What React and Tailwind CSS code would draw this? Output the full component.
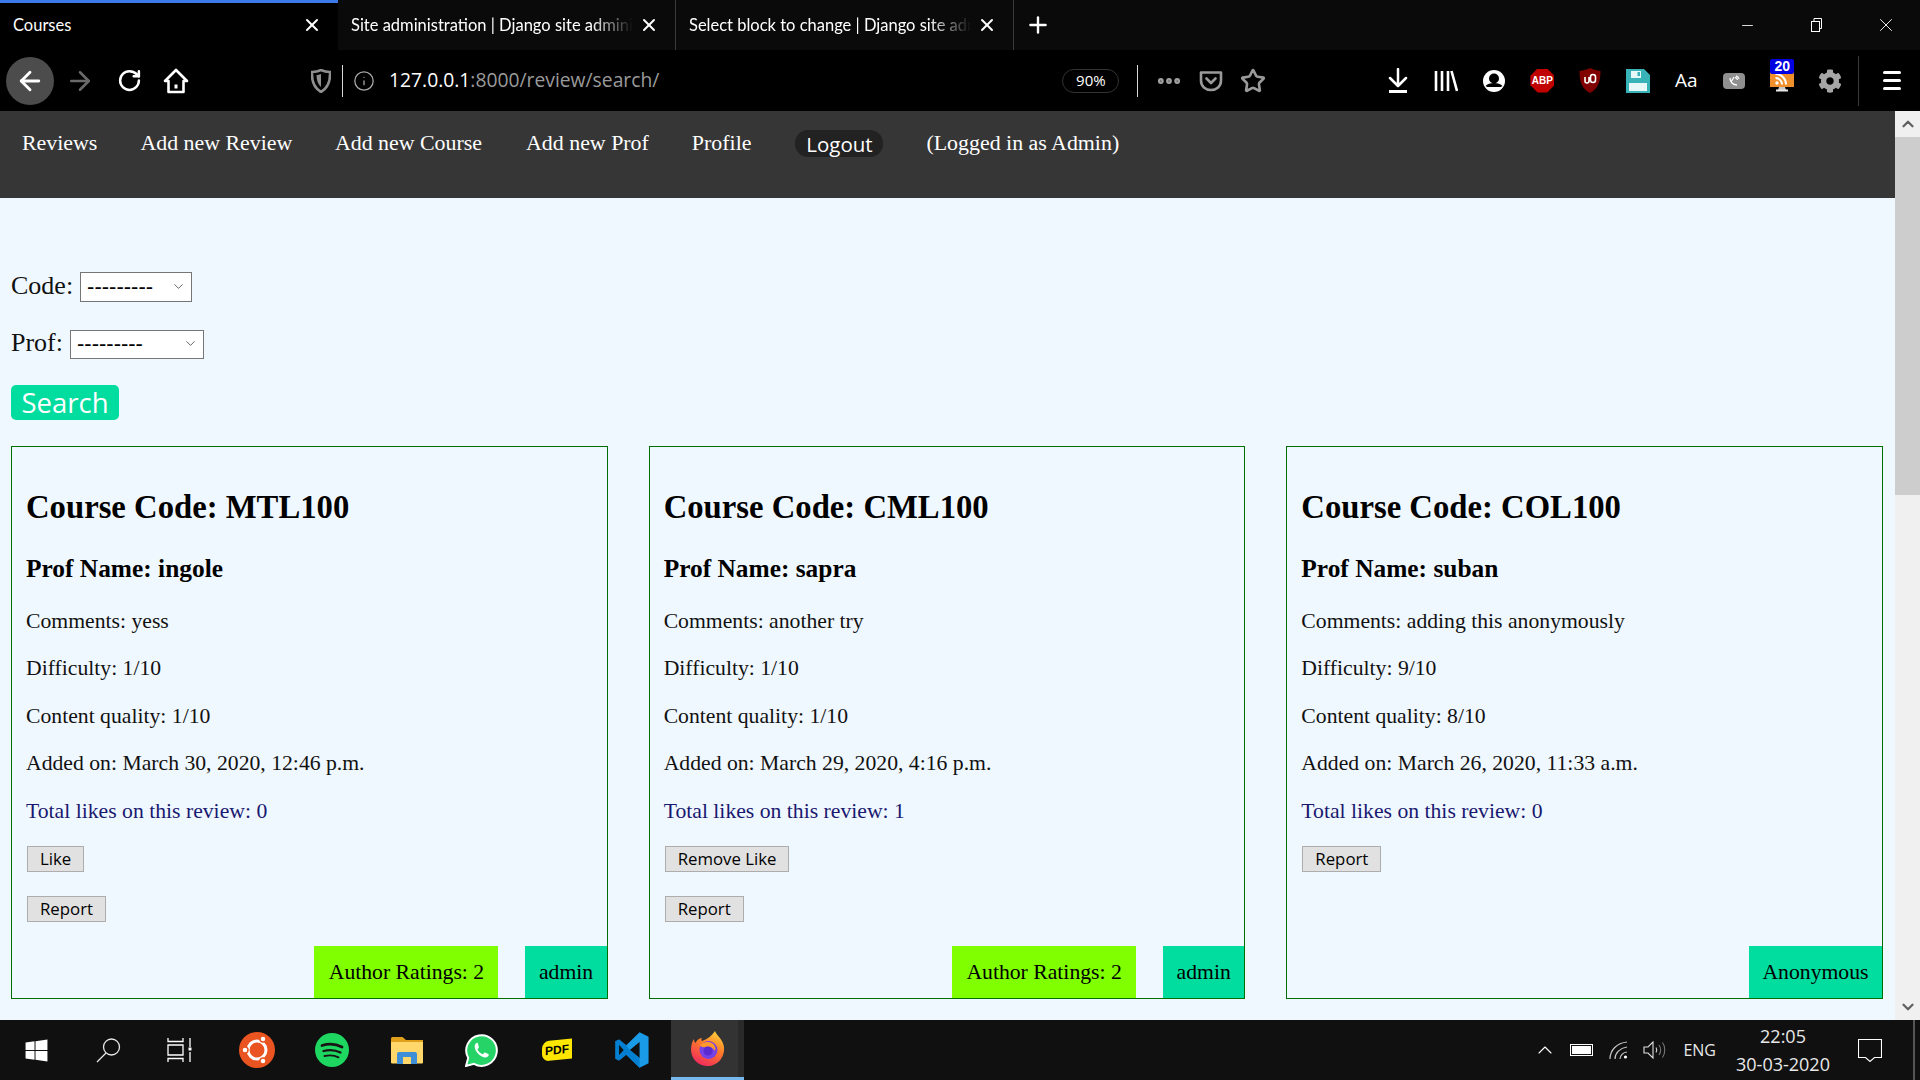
import { ArrowLeft, ArrowRight, RotateCw, Info, Star, Ellipsis, X, Plus, Minus, ChevronDown, ChevronUp } from "lucide-react";
import { FaWindows, FaCog } from "react-icons/fa";

const SERIF = "font-['Liberation_Serif',serif]";
const UI = "font-['Open_Sans',sans-serif]";

const REVIEWS = [
  {
    code: "MTL100",
    prof: "ingole",
    comments: "yess",
    difficulty: "1/10",
    quality: "1/10",
    added: "March 30, 2020, 12:46 p.m.",
    likes: 0,
    like: "Like",
    ratings: 2,
    author: "admin",
  },
  {
    code: "CML100",
    prof: "sapra",
    comments: "another try",
    difficulty: "1/10",
    quality: "1/10",
    added: "March 29, 2020, 4:16 p.m.",
    likes: 1,
    like: "Remove Like",
    ratings: 2,
    author: "admin",
  },
  {
    code: "COL100",
    prof: "suban",
    comments: "adding this anonymously",
    difficulty: "9/10",
    quality: "8/10",
    added: "March 26, 2020, 11:33 a.m.",
    likes: 0,
    author: "Anonymous",
  },
];

function Tab({ title, active, fade }) {
  return (
    <div className={`flex h-[50px] w-[338px] items-center pl-[13px] pr-[16px] ${active ? "border-t-[3px] border-[#3b7ae8] bg-black pb-[3px]" : "border-r border-[#3a3a3a]"}`}>
      <span className={`flex-1 overflow-hidden whitespace-nowrap font-['Lato',sans-serif] text-[16.5px] text-white ${fade ? "[mask-image:linear-gradient(to_right,black_85%,transparent)]" : ""}`}>
        {title}
      </span>
      <X size={20} strokeWidth={2.4} className="ml-[6px] shrink-0 text-white" />
    </div>
  );
}

function ToolIcon({ children, className = "" }) {
  return <div className={`flex h-[61px] w-[48px] shrink-0 items-center justify-center ${className}`}>{children}</div>;
}

function TabBar() {
  return (
    <div className="flex h-[50px] shrink-0 items-center bg-[#0a0a0a]">
      <Tab title="Courses" active />
      <Tab title="Site administration | Django site administration" fade />
      <Tab title="Select block to change | Django site admin" fade />
      <Plus size={26} strokeWidth={2.2} className="ml-[11px] text-white" />
      <div className="ml-auto flex items-center">
        <div className="flex w-[69px] justify-center"><Minus size={17} strokeWidth={1.2} className="text-white" /></div>
        <div className="flex w-[69px] justify-center">
          <svg width="15" height="16" viewBox="0 0 15 16" fill="none" stroke="white">
            <rect x="2.5" y="4.5" width="8" height="10" />
            <path d="M5 4.5V1.5h7.5v10h-2" />
          </svg>
        </div>
        <div className="flex w-[69px] justify-center"><X size={22} strokeWidth={1} className="text-white" /></div>
      </div>
    </div>
  );
}

function Toolbar() {
  return (
    <div className="flex h-[61px] shrink-0 items-center bg-black">
      <div className="ml-[6px] flex h-[48px] w-[48px] items-center justify-center rounded-full bg-[#4c4c4c]">
        <ArrowLeft size={30} strokeWidth={2.3} className="text-white" />
      </div>
      <ToolIcon className="ml-[2px]"><ArrowRight size={30} strokeWidth={2} className="text-[#6a6a6a]" /></ToolIcon>
      <ToolIcon className="ml-[1px]"><RotateCw size={25} strokeWidth={2.4} className="text-white" /></ToolIcon>
      <ToolIcon className="-ml-[1px]">
        <svg width="26" height="26" viewBox="0 0 26 26" fill="none" stroke="white" strokeWidth="2.6" strokeLinejoin="round">
          <path d="M2 13 13 2l11 11h-3.500v11h-15V13z" />
          <rect x="11.500" y="16.500" width="3" height="4" fill="white" stroke="none" />
        </svg>
      </ToolIcon>

      <ToolIcon className="ml-[97px]">
        <svg width="20" height="24" viewBox="0 0 20 24">
          <path d="M10 1c3 1.500 6 2 9 2 .500 9-2 16-9 20C3 19 .500 12 1 3c3 0 6-.500 9-2z" fill="none" stroke="#8f8f8f" strokeWidth="2.6" />
          <path d="M10 5c-1.500.800-3 1-4.500 1.200C5.500 11 7 15.500 10 18z" fill="#8f8f8f" />
        </svg>
      </ToolIcon>
      <div className="-ml-[3px] h-[32px] w-px bg-[#d8d8d8]" />
      <Info size={22} strokeWidth={1.4} className="ml-[10px] text-[#a8a8a8]" />
      <div className={`ml-[14px] text-[19.3px] ${UI}`}>
        <span className="text-white">127.0.0.1</span>
        <span className="text-[#9a9a9a]">:8000/review/search/</span>
      </div>

      <div className={`ml-[403px] flex h-[24px] w-[57px] items-center justify-center rounded-full border border-[#333] text-[15px] text-white ${UI}`}>90%</div>
      <div className="ml-[18px] h-[32px] w-px bg-[#d8d8d8]" />
      <ToolIcon className="ml-[7px]"><Ellipsis size={28} strokeWidth={3} className="text-[#a0a0a0]" /></ToolIcon>
      <ToolIcon className="-ml-[6px]">
        <svg width="24" height="24" viewBox="0 0 24 24" fill="none" stroke="#9a9a9a" strokeWidth="2.6" strokeLinejoin="round" strokeLinecap="round">
          <path d="M2 3.500h20v8c0 6-4.500 9.500-10 9.500S2 17.500 2 11.500z" />
          <path d="m7.500 9.500 4.500 4.500 4.500-4.500" />
        </svg>
      </ToolIcon>
      <ToolIcon className="-ml-[6px]"><Star size={26} strokeWidth={2.4} className="text-[#9a9a9a]" /></ToolIcon>

      <ToolIcon className="ml-[97px]">
        <svg width="20" height="25" viewBox="0 0 20 25" fill="none" stroke="white" strokeWidth="2.5" strokeLinecap="round" strokeLinejoin="round">
          <path d="M10 1v16M2 10l8 8 8-8" />
          <path d="M1 23.500h18" strokeLinecap="butt" strokeWidth="3" />
        </svg>
      </ToolIcon>
      <ToolIcon>
        <svg width="24" height="24" viewBox="0 0 24 24" fill="none" stroke="white" strokeWidth="2.6">
          <path d="M2 2v20M8 2v20M14 2v20M17.500 2l5.500 20" />
        </svg>
      </ToolIcon>
      <ToolIcon>
        <svg width="24" height="24" viewBox="0 0 24 24">
          <circle cx="12" cy="12" r="11" fill="white" />
          <circle cx="12" cy="9.500" r="5" fill="black" />
          <path d="M3.500 17c3-4 14-4 17 0-2 1.500-3 1-8.500 1s-6.500.500-8.500-1z" fill="black" />
        </svg>
      </ToolIcon>
      <ToolIcon>
        <div className="relative flex h-[24px] w-[24px] items-center justify-center bg-[#c10000] [clip-path:polygon(30%_0,70%_0,100%_30%,100%_70%,70%_100%,30%_100%,0_70%,0_30%)]">
          <span className="font-['Liberation_Sans',sans-serif] text-[10px] font-bold leading-none text-white">ABP</span>
        </div>
      </ToolIcon>
      <ToolIcon>
        <svg width="22" height="25" viewBox="0 0 22 25">
          <path d="M11 0c3 1.500 7 2.500 10.500 3 0 10-2 17.500-10.500 22C2.500 20.500.500 13 .500 3 4 2.500 8 1.500 11 0z" fill="#800000" />
          <path d="M6 9v4a2 2 0 0 0 4 0V9M11.500 13V9a2.500 2.500 0 0 1 5 0v3a2.500 2.500 0 0 1-5 0z" fill="none" stroke="white" strokeWidth="1.6" />
        </svg>
      </ToolIcon>
      <ToolIcon>
        <svg width="24" height="24" viewBox="0 0 24 24">
          <path d="M0 0h18l6 6v18H0z" fill="#38b4b8" />
          <path d="M5 2h10v7H5zM3 14h18v8H3z" fill="#e8f8f8" />
          <path d="M11.500 3h2.500v4h-2.500z" fill="#38b4b8" />
        </svg>
      </ToolIcon>
      <ToolIcon><span className={`text-[19px] text-white ${UI}`}>Aa</span></ToolIcon>
      <ToolIcon>
        <div className="flex h-[16px] w-[22px] items-center justify-center rounded-[4px] bg-[#8f8f8f]">
          <svg width="12" height="12" viewBox="0 0 12 12" fill="none" stroke="white" strokeWidth="1.300">
            <path d="M2 3c0 4 3 7 7 7M6 2l-3 5M7 2.500a3 3 0 0 1 2.500 2.500M8 .800a5 5 0 0 1 3 3" />
          </svg>
        </div>
      </ToolIcon>
      <ToolIcon className="relative">
        <svg width="24" height="24" viewBox="0 0 24 24">
          <rect x="0" y="1" width="24" height="17" fill="#f0902c" />
          <path d="M9 18h6l1 3H8z" fill="#c8c8c8" />
          <path d="M6 20.500h12v2H6z" fill="#e8e8e8" />
          <circle cx="7" cy="14" r="1.700" fill="white" />
          <path d="M5.500 9a6.500 6.500 0 0 1 6.500 6.500M5.500 5a10.500 10.500 0 0 1 10.500 10.500" fill="none" stroke="white" strokeWidth="2" />
        </svg>
        <span className="absolute left-[12px] top-[9px] flex h-[15px] w-[24px] items-center justify-center rounded-[2px] bg-[#0000e0] font-['Liberation_Sans',sans-serif] text-[14px] font-bold text-white">20</span>
      </ToolIcon>
      <ToolIcon><FaCog size={24} className="text-[#a6a6a6]" /></ToolIcon>
      <div className="ml-[4px] h-[50px] w-px bg-[#3a3a3a]" />
      <div className="ml-[24px] flex flex-col gap-[5px]">
        <div className="h-[3px] w-[18px] rounded-full bg-white" />
        <div className="h-[3px] w-[18px] rounded-full bg-white" />
        <div className="h-[3px] w-[18px] rounded-full bg-white" />
      </div>
    </div>
  );
}

function NavBar() {
  return (
    <nav className={`flex h-[87px] items-start bg-[#363636] pl-[22px] pt-[18px] text-[21.9px] leading-[28px] text-white ${SERIF}`}>
      <a>Reviews</a>
      <a className="ml-[43px]">Add new Review</a>
      <a className="ml-[42.5px]">Add new Course</a>
      <a className="ml-[44px]">Add new Prof</a>
      <a className="ml-[43px]">Profile</a>
      <a className={`ml-[44px] mt-[1px] flex h-[27px] w-[88px] items-center justify-center rounded-[13px] bg-[#222222] text-[20.5px] ${UI}`}>Logout</a>
      <span className="ml-[43px]">(Logged in as Admin)</span>
    </nav>
  );
}

function Select({ className }) {
  return (
    <div className={`relative ml-[7px] ${className}`}>
      <select className="h-full w-full appearance-none rounded-none border border-[#767676] bg-white pl-[6px] font-['Liberation_Sans',sans-serif] text-[22px] leading-none text-black">
        <option>---------</option>
      </select>
      <ChevronDown size={15} strokeWidth={1.2} className="pointer-events-none absolute right-[6px] top-[8px] text-[#333]" />
    </div>
  );
}

function SearchForm() {
  return (
    <form className={`text-[26px] leading-[30px] text-[#111] ${SERIF}`}>
      <div className="flex h-[30px] items-center">
        <label>Code:</label>
        <Select className="h-[30px] w-[112px]" />
      </div>
      <div className="mt-[27px] flex h-[29px] items-center">
        <label>Prof:</label>
        <Select className="h-[29px] w-[134px]" />
      </div>
      <button type="button" className={`mt-[28px] block h-[35px] w-[108px] rounded-[5px] bg-[#00dd9f] text-[27.5px] leading-[34px] text-white ${UI}`}>Search</button>
    </form>
  );
}

function ReviewCard({ review }) {
  const btn = `block h-[26px] border border-[#adadad] bg-[#e1e1e1] px-[12px] text-[16.8px] leading-[24px] text-black ${UI}`;
  return (
    <div className={`flex h-[553px] flex-col border border-[#006e00] text-[21.7px] leading-[24px] text-[#111] ${SERIF}`}>
      <div className="px-[14px]">
        <h2 className="mt-[41px] text-[32.7px] font-bold leading-[38px] text-black">Course Code: {review.code}</h2>
        <h3 className="mt-[27px] text-[25.4px] font-bold leading-[30px] text-black">Prof Name: {review.prof}</h3>
        <p className="mt-[26px]">Comments: {review.comments}</p>
        <p className="mt-[23.4px]">Difficulty: {review.difficulty}</p>
        <p className="mt-[23.4px]">Content quality: {review.quality}</p>
        <p className="mt-[23.4px]">Added on: {review.added}</p>
        <p className="mt-[23.4px] text-[#191970]">Total likes on this review: {review.likes}</p>
        <div className="pl-[1px]">
          {review.like && <button type="button" className={`mt-[23px] ${btn}`}>{review.like}</button>}
          <button type="button" className={`${review.like ? "mt-[24px]" : "mt-[23px]"} ${btn}`}>Report</button>
        </div>
      </div>
      <div className="mt-auto flex justify-end gap-[27px]">
        {review.ratings && (
          <div className="flex h-[52px] w-[184px] items-center justify-center bg-[#7fff00] text-black">Author Ratings: {review.ratings}</div>
        )}
        <div className="flex h-[52px] items-center bg-[#00dd9f] px-[13.5px] text-black">{review.author}</div>
      </div>
    </div>
  );
}

function Scrollbar() {
  return (
    <div className="flex w-[25px] shrink-0 flex-col bg-[#f0f0f0]">
      <div className="flex h-[26px] items-center justify-center"><ChevronUp size={18} strokeWidth={3} className="text-[#606060]" /></div>
      <div className="h-[358px] bg-[#cdcdcd]" />
      <div className="mt-auto flex h-[26px] items-center justify-center"><ChevronDown size={18} strokeWidth={3} className="text-[#606060]" /></div>
    </div>
  );
}

function Firefox() {
  return (
    <svg width="36" height="36" viewBox="0 0 36 36">
      <defs>
        <linearGradient id="ffg" x1="0.8" y1="0" x2="0.3" y2="1">
          <stop offset="0" stopColor="#ffd53a" />
          <stop offset="0.45" stopColor="#ff7a2a" />
          <stop offset="1" stopColor="#f0285e" />
        </linearGradient>
      </defs>
      <path d="M25 0c1 4 8 8 9 16 1 11-7 19-16.500 19C8 35 1 27.500 1 18.500 1 14 2.500 10 4 8c0 2 .500 3 1.500 4C7 9 9 7.500 12 7c-1 1.500-1 2.500 0 3 5-2 9-4 13-10z" fill="url(#ffg)" />
      <circle cx="18.500" cy="19" r="9" fill="#7542e5" />
      <path d="M10 14c3-3 8-4 12-2 3 2 4 5 3 8-2-4-6-5-10-4-2 .500-4 0-5-2z" fill="#ff9a2a" />
      <circle cx="18" cy="20" r="4.500" fill="#5a2bd0" />
    </svg>
  );
}

function TaskIcon({ children, className = "" }) {
  return <div className={`flex h-[60px] shrink-0 items-center justify-center ${className}`}>{children}</div>;
}

function Taskbar() {
  return (
    <div className={`flex h-[60px] shrink-0 items-center bg-[#101010] text-[#e8e8e8] ${UI}`}>
      <TaskIcon className="w-[72px]"><FaWindows size={25} className="text-white" /></TaskIcon>
      <TaskIcon className="w-[72px]">
        <svg width="25" height="25" viewBox="0 0 25 25" fill="none" stroke="#e8e8e8" strokeWidth="1.300">
          <circle cx="15.500" cy="9" r="8" />
          <path d="M10 15 1 24" />
        </svg>
      </TaskIcon>
      <TaskIcon className="w-[72px]">
        <svg width="26" height="24" viewBox="0 0 26 24" fill="none" stroke="white" strokeWidth="1.300">
          <path d="M1 0v3.500h15V0M1 24v-3.500h15V24M1 7h15v10H1zM23 0v9M23 14v10" />
          <rect x="21.500" y="9.500" width="3" height="3" fill="white" stroke="none" />
        </svg>
      </TaskIcon>
      <TaskIcon className="ml-[3px] w-[75px]">
        <svg width="36" height="36" viewBox="0 0 36 36">
          <circle cx="18" cy="18" r="18" fill="#e95420" />
          <circle cx="18" cy="18" r="9" fill="none" stroke="white" strokeWidth="3" />
          <circle cx="24" cy="7" r="3" fill="white" stroke="#e95420" strokeWidth="1.500" />
          <circle cx="24" cy="29" r="3" fill="white" stroke="#e95420" strokeWidth="1.500" />
          <circle cx="6" cy="18" r="3" fill="white" stroke="#e95420" strokeWidth="1.500" />
        </svg>
      </TaskIcon>
      <TaskIcon className="w-[75px]">
        <svg width="34" height="34" viewBox="0 0 34 34" fill="none" stroke="#191414" strokeLinecap="round">
          <circle cx="17" cy="17" r="17" fill="#1ed760" stroke="none" />
          <path d="M7 12.500c6-1.800 14-1.500 20 1.500" strokeWidth="2.800" />
          <path d="M8.500 18c5-1.400 12-1 17 1.500" strokeWidth="2.300" />
          <path d="M9.500 23c4.500-1 10-.800 14 1.300" strokeWidth="1.900" />
        </svg>
      </TaskIcon>
      <TaskIcon className="w-[75px]">
        <svg width="32" height="27" viewBox="0 0 32 27">
          <path d="M0 1.500A1.500 1.500 0 0 1 1.500 0h10L15 3h17v5H0z" fill="#e0a01c" />
          <path d="M0 5h32v20.500a1 1 0 0 1-1 1H1a1 1 0 0 1-1-1z" fill="#ffd76a" />
          <path d="M6 17a2 2 0 0 1 2-2h16a2 2 0 0 1 2 2v10h-6v-7h-8v7H6z" fill="#3e8fd8" />
          <path d="M12 20h8v7h-8z" fill="#ffd76a" />
        </svg>
      </TaskIcon>
      <TaskIcon className="w-[75px]">
        <svg width="33" height="33" viewBox="0 0 33 33">
          <path d="M1 32l2.200-8A15.300 15.300 0 1 1 9 29.800z" fill="#25d366" stroke="white" strokeWidth="2" />
          <path d="M11.500 9c-1 .500-2 2-1.800 4 .500 4.500 5 9.500 10 10.500 2 .300 3.500-.800 4-2.200.200-.800 0-1-.500-1.300l-3-1.500c-.500-.200-.800 0-1 .300l-1 1.200c-.300.300-.600.300-1 .100-2-1-3.500-2.300-4.500-4.300-.200-.400-.100-.700.200-1l.800-1c.200-.300.200-.600.100-.900L13 9.500c-.300-.700-1-.800-1.500-.500z" fill="white" />
        </svg>
      </TaskIcon>
      <TaskIcon className="w-[75px]">
        <div className="relative flex h-[20px] w-[30px] -skew-y-[6deg] items-center justify-center rounded-l-[7px] bg-[#ffe600]">
          <span className="font-['Liberation_Sans',sans-serif] text-[12px] font-bold leading-none text-black">PDF</span>
        </div>
      </TaskIcon>
      <TaskIcon className="w-[75px]">
        <svg width="36" height="36" viewBox="0 0 100 100">
          <path d="M71 99 34 63 14 79 4 74V26l10-5 20 16L71 1l25 12v74zM71 28 44 50l27 22z" fill="#1a9be8" />
          <path d="M34 37 14 21 4 26v48l10 5 20-16 37 36V72L44 50z" fill="#007acc" opacity="0.85" />
          <path d="M14 36v28l13-14z" fill="#101010" />
        </svg>
      </TaskIcon>
      <div className="relative ml-[2px] flex h-[60px] w-[73px] items-center justify-center border-b-[3px] border-[#76b9ed] bg-[#333333]">
        <Firefox />
        <div className="absolute bottom-0 right-0 top-0 w-[6px] bg-[#2a2a2a]" />
      </div>

      <div className="ml-auto flex items-center">
        <ChevronUp size={24} strokeWidth={1.1} className="text-white" />
        <div className="ml-[13px] flex h-[12px] w-[23px] items-center border border-white p-[1px]">
          <div className="h-full w-full bg-white" />
        </div>
        <svg className="ml-[16px]" width="20" height="18" viewBox="0 0 20 18" fill="none" stroke="#c8c8c8" strokeWidth="1.200">
          <path d="M1 18C1 9 8 2 18 1M6 18c0-6 5-11 12-12M11 18c0-3 3-7 7-7" />
          <circle cx="16.500" cy="16" r="1.600" fill="white" stroke="none" />
        </svg>
        <svg className="ml-[14px]" width="23" height="18" viewBox="0 0 23 18" fill="none" stroke="#e0e0e0" strokeWidth="1.100">
          <path d="M1 6h4l5-5v16l-5-5H1z" />
          <path d="M13 6.500c1 1.500 1 3.500 0 5" />
          <path d="M16 4c2 3 2 7 0 10M19.500 1.500c3 4 3 11 0 15" stroke="#777" />
        </svg>
        <span className="ml-[17px] text-[16px]">ENG</span>
        <div className="ml-[17px] flex w-[100px] flex-col items-center text-[18px] leading-[28px]">
          <span>22:05</span>
          <span>30-03-2020</span>
        </div>
        <svg className="ml-[25px]" width="24" height="24" viewBox="0 0 24 24" fill="none" stroke="white" strokeWidth="1.100">
          <path d="M.5 1.500h23v18h-7l-4.500 4-4.500-4h-7z" />
        </svg>
        <div className="ml-[31px] h-[60px] w-[2px] bg-[#555]" />
        <div className="w-[5px]" />
      </div>
    </div>
  );
}

export default function App() {
  return (
    <div className="flex h-[1080px] w-[1920px] flex-col overflow-hidden bg-black">
      <TabBar />
      <Toolbar />
      <div className="flex min-h-0 flex-1 bg-[#f0f8ff]">
        <div className="min-w-0 flex-1 overflow-hidden">
          <NavBar />
          <div className="px-[11px] pt-[73px]">
            <SearchForm />
            <div className="mt-[26px] grid grid-cols-3 gap-[41px] pr-[1px]">
              {REVIEWS.map((r) => (
                <ReviewCard key={r.code} review={r} />
              ))}
            </div>
          </div>
        </div>
        <Scrollbar />
      </div>
      <Taskbar />
    </div>
  );
}
